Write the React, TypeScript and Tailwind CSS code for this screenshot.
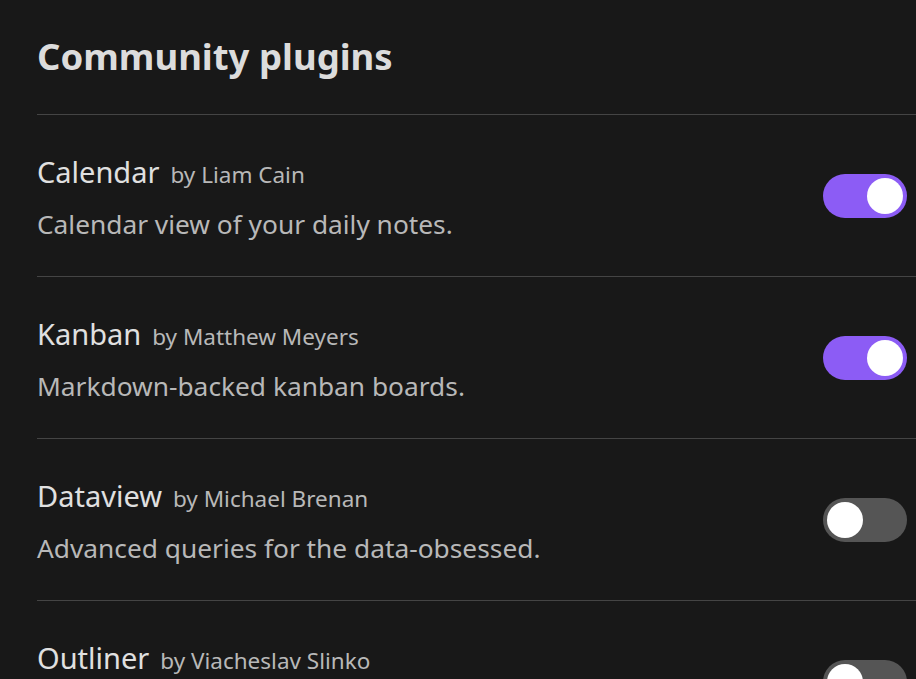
const plugins = [
  { name: "Calendar", author: "Liam Cain", desc: "Calendar view of your daily notes.", on: true },
  { name: "Kanban", author: "Matthew Meyers", desc: "Markdown-backed kanban boards.", on: true },
  { name: "Dataview", author: "Michael Brenan", desc: "Advanced queries for the data-obsessed.", on: false },
  // description sits below the fold in the screenshot
  { name: "Outliner", author: "Viacheslav Slinko", desc: "\u00a0", on: false },
];

function Toggle({ on }: { on: boolean }) {
  return (
    <div
      className={
        "flex h-[44px] w-[84px] shrink-0 items-center rounded-full px-[4px] " +
        (on ? "justify-end bg-[#8c5cf5]" : "justify-start bg-[#555555]")
      }
    >
      <div className="h-[36px] w-[36px] rounded-full bg-white" />
    </div>
  );
}

export default function App() {
  return (
    <div
      className="h-[679px] overflow-hidden bg-[#181818] pl-[37px] text-[#dadada]"
      style={{ fontFamily: '"Noto Sans", "Open Sans", sans-serif' }}
    >
      <h1 className="flex h-[114px] items-center pb-[2px] text-[36.5px] font-bold text-[#dcdcdc]">
        Community plugins
      </h1>
      {plugins.map((p) => (
        <div
          key={p.name}
          className="flex h-[162px] items-center justify-between border-t border-[#444444] pr-[9px]"
        >
          <div className="flex flex-col gap-[11px] pt-[3px]">
            <div className="flex items-baseline gap-[11px]">
              <span className="text-[29px] text-[#e0e0e0]">{p.name}</span>
              <span className="text-[22.5px] text-[#b8b8b8]">by {p.author}</span>
            </div>
            <div className="text-[26.3px] text-[#b8b8b8]">{p.desc}</div>
          </div>
          <Toggle on={p.on} />
        </div>
      ))}
    </div>
  );
}
